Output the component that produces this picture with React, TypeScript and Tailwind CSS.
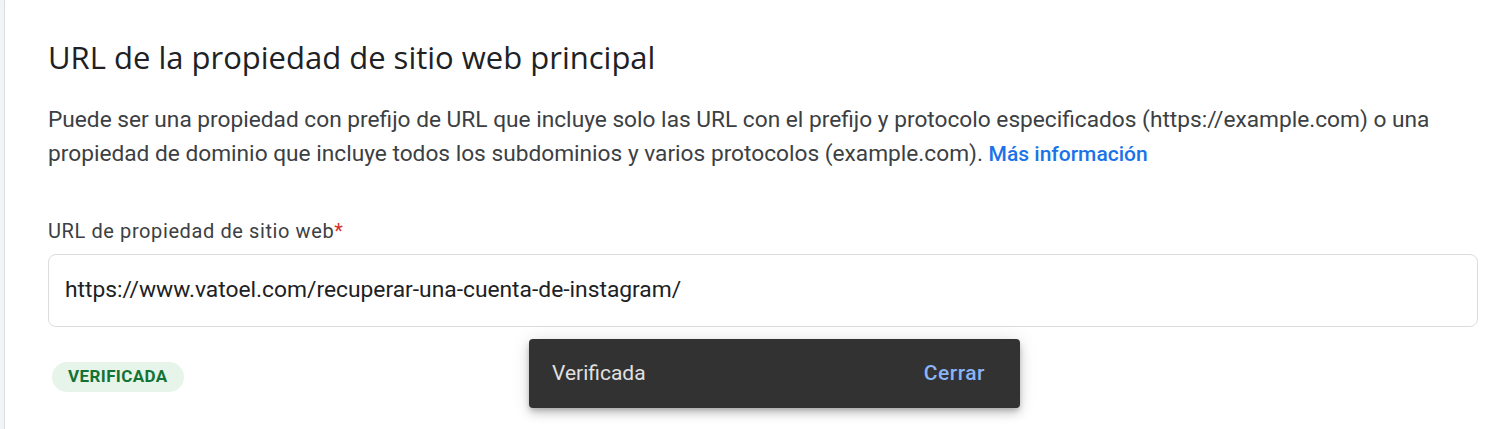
import React from 'react';

const font = { fontFamily: 'Roboto, "Liberation Sans", sans-serif' };

const App: React.FC = () => {
  return (
    <div className="relative w-[1499px] h-[429px] overflow-hidden bg-[#f1f3f4] pl-[4px]" style={font}>
      <div className="-mt-[6px] w-[1530px] h-[450px] bg-white border border-[#dadce0] rounded-lg pl-[43px] pt-[44px]">
        <h2 className="text-[31px] leading-[36px] text-[#202124] font-normal" style={{ fontFamily: '"Open Sans", Roboto, sans-serif' }}>
          URL de la propiedad de sitio web principal
        </h2>
        <p className="mt-[28px] w-[1420px] text-[22.7px] leading-[34px] text-[#3c4043]">
          Puede ser una propiedad con prefijo de URL que incluye solo las URL con el prefijo y protocolo especificados (https://example.com) o una propiedad de dominio que incluye todos los subdominios y varios protocolos (example.com).{' '}
          <a className="text-[#1a73e8] text-[21px] font-medium">Más información</a>
        </p>

        <div className="mt-[48px] text-[20px] leading-[24px] tracking-[0.6px] text-[#3c4043]">
          URL de propiedad de sitio web<span className="text-[#d93025]">*</span>
        </div>
        <div className="mt-[11px] w-[1430px] h-[73px] border border-[#dadce0] rounded-lg flex items-center px-[16px] text-[22.8px] text-[#202124]">
          https://www.vatoel.com/recuperar-una-cuenta-de-instagram/
        </div>

        <div className="mt-[35px] ml-[4px] inline-flex items-center h-[30px] px-[16px] rounded-full bg-[#e6f4ea] text-[#137333] text-[17px] font-bold tracking-[0.4px]">
          VERIFICADA
        </div>
      </div>

      <div className="absolute left-[529px] top-[339px] w-[491px] h-[69px] bg-[#323232] rounded-[4px] shadow-[0_3px_5px_-1px_rgba(0,0,0,0.2),0_6px_10px_0_rgba(0,0,0,0.14),0_1px_18px_0_rgba(0,0,0,0.12)] flex items-center justify-between pl-[23px] pr-[35px]">
        <span className="text-[21px] text-[#e0e0e0]">Verificada</span>
        <span className="text-[21px] font-medium tracking-[0.5px] text-[#8ab4f8]">Cerrar</span>
      </div>
    </div>
  );
};

export default App;
